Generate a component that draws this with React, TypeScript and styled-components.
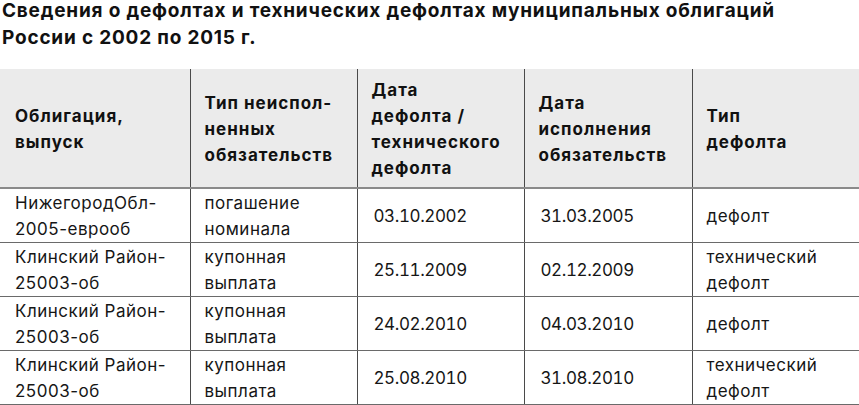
import React from "react";
import styled, { createGlobalStyle } from "styled-components";

const GlobalStyle = createGlobalStyle`
  html, body {
    margin: 0;
    padding: 0;
    background: #ffffff;
  }
  body {
    font-family: "Inter", "Liberation Sans", sans-serif;
    color: #161616;
  }
`;

const Page = styled.div`
  width: 859px;
  height: 405px;
  overflow: hidden;
`;

const Title = styled.h1`
  margin: 0;
  padding: 0 0 0 2px;
  height: 69px;
  font-size: 19px;
  font-weight: 700;
  letter-spacing: 0.8px;
  color: #111111;
`;

const TitleLine = styled.span`
  display: block;
  line-height: 22px;
  & + & {
    margin-top: 5px;
  }
`;

const Table = styled.table`
  width: 859px;
  border-collapse: collapse;
  table-layout: fixed;
`;

const HeadCell = styled.th`
  background: #ebebeb;
  text-align: left;
  vertical-align: middle;
  font-size: 17px;
  font-weight: 700;
  line-height: 26px;
  letter-spacing: 1px;
  padding: 8px 6px 6px 14px;
  border-bottom: 2px solid #8a8a8a;
  color: #111111;
  & + & {
    border-left: 1px solid #4a4a4a;
  }
  &:first-child {
    padding-left: 15px;
  }
`;

const Cell = styled.td<{ $numeric?: boolean }>`
  font-size: 17px;
  font-weight: 400;
  line-height: 26px;
  letter-spacing: ${(p) => (p.$numeric ? "-0.4px" : "0.5px")};
  font-variant-numeric: ${(p) => (p.$numeric ? "tabular-nums" : "normal")};
  padding: 0 6px 0 ${(p) => (p.$numeric ? "16px" : "14px")};
  height: 53px;
  vertical-align: middle;
  border-bottom: 1px solid #6a6a6a;
  & + & {
    border-left: 1px solid #4a4a4a;
  }
  &:first-child {
    padding-left: 15px;
  }
`;

const widths = [190, 167, 167, 168, 167];

const headLines: string[][] = [
  ["Облигация,", "выпуск"],
  ["Тип неиспол-", "ненных", "обязательств"],
  ["Дата", "дефолта /", "технического", "дефолта"],
  ["Дата", "исполнения", "обязательств"],
  ["Тип", "дефолта"],
];

const rows: string[][][] = [
  [["НижегородОбл-", "2005-еврооб"], ["погашение", "номинала"], ["03.10.2002"], ["31.03.2005"], ["дефолт"]],
  [["Клинский Район-", "25003-об"], ["купонная", "выплата"], ["25.11.2009"], ["02.12.2009"], ["технический", "дефолт"]],
  [["Клинский Район-", "25003-об"], ["купонная", "выплата"], ["24.02.2010"], ["04.03.2010"], ["дефолт"]],
  [["Клинский Район-", "25003-об"], ["купонная", "выплата"], ["25.08.2010"], ["31.08.2010"], ["технический", "дефолт"]],
];

const Lines = ({ lines }: { lines: string[] }) => (
  <>
    {lines.map((l, i) => (
      <React.Fragment key={i}>
        {i > 0 && <br />}
        {l}
      </React.Fragment>
    ))}
  </>
);

const App = () => {
  return (
    <Page>
      <GlobalStyle />
      <Title>
        <TitleLine>Сведения о дефолтах и технических дефолтах муниципальных облигаций</TitleLine>
        <TitleLine>России с 2002 по 2015 г.</TitleLine>
      </Title>
      <Table>
        <colgroup>
          {widths.map((w, i) => (
            <col key={i} style={{ width: w }} />
          ))}
        </colgroup>
        <thead>
          <tr>
            {headLines.map((h, i) => (
              <HeadCell key={i}>
                <Lines lines={h} />
              </HeadCell>
            ))}
          </tr>
        </thead>
        <tbody>
          {rows.map((r, i) => (
            <tr key={i}>
              {r.map((c, j) => (
                <Cell key={j} $numeric={j === 2 || j === 3}>
                  <Lines lines={c} />
                </Cell>
              ))}
            </tr>
          ))}
        </tbody>
      </Table>
    </Page>
  );
};

export default App;
